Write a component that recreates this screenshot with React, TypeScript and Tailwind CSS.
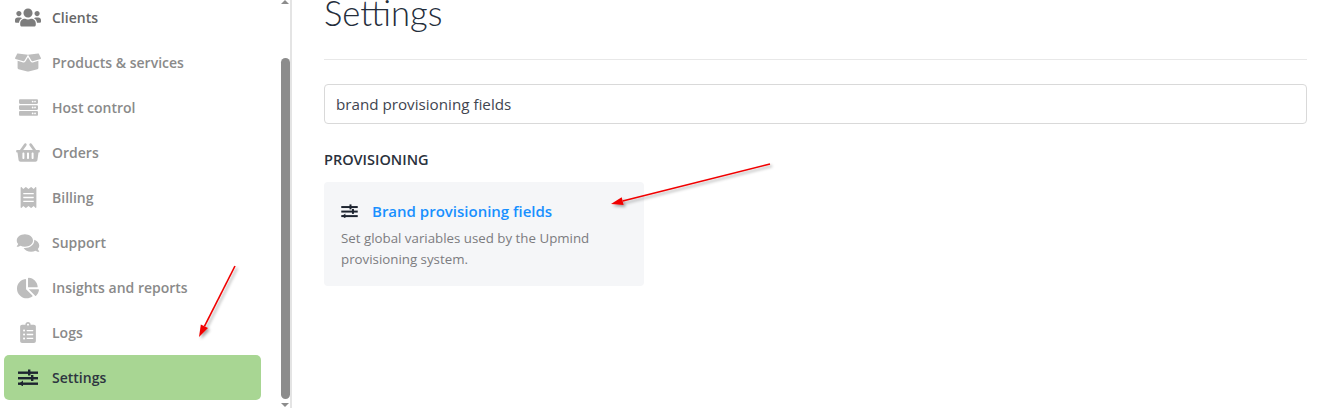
import React from "react";
import { FaUsers, FaBoxOpen, FaServer, FaShoppingBasket, FaReceipt, FaComments, FaChartPie, FaClipboardList } from "react-icons/fa";

function Sliders({ className }: { className?: string }) {
  return (
    <svg viewBox="0 0 20 17" className={className} fill="currentColor">
      <rect x="0" y="2.5" width="20" height="2.4" />
      <rect x="10" y="0.5" width="2.4" height="6" />
      <rect x="0" y="8" width="20" height="2.4" />
      <rect x="13" y="6" width="2.4" height="6" />
      <rect x="0" y="13.5" width="20" height="2.4" />
      <polygon points="1,14.7 5,11.5 5,17.5" />
    </svg>
  );
}

const items: { label: string; icon: React.ComponentType<{ className?: string }>; size: string; dark?: boolean }[] = [
  { label: "Clients", icon: FaUsers, size: "w-[26px] h-[21px]", dark: true },
  { label: "Products & services", icon: FaBoxOpen, size: "w-[26px] h-[21px]" },
  { label: "Host control", icon: FaServer, size: "w-[21px] h-[19px]" },
  { label: "Orders", icon: FaShoppingBasket, size: "w-[24px] h-[21px]" },
  { label: "Billing", icon: FaReceipt, size: "w-[17px] h-[21px]" },
  { label: "Support", icon: FaComments, size: "w-[24px] h-[20px]" },
  { label: "Insights and reports", icon: FaChartPie, size: "w-[22px] h-[22px]" },
  { label: "Logs", icon: FaClipboardList, size: "w-[16px] h-[21px]" },
];

function Arrow({ className, x1, y1, x2, y2, w, h, id }: { className: string; x1: number; y1: number; x2: number; y2: number; w: number; h: number; id: string }) {
  const a = Math.atan2(y2 - y1, x2 - x1);
  const L = 12;
  const W = 4;
  const bx = x2 - L * Math.cos(a);
  const by = y2 - L * Math.sin(a);
  const px = -Math.sin(a) * W;
  const py = Math.cos(a) * W;
  return (
    <svg className={className} width={w} height={h} viewBox={`0 0 ${w} ${h}`} fill="none">
      <defs>
        <filter id={id} x="-20%" y="-20%" width="150%" height="150%">
          <feDropShadow dx="2" dy="2" stdDeviation="1.5" floodColor="#000" floodOpacity="0.35" />
        </filter>
      </defs>
      <g filter={`url(#${id})`}>
        <line x1={x1} y1={y1} x2={bx} y2={by} stroke="#f00000" strokeWidth="1.6" />
        <polygon points={`${x2},${y2} ${bx + px},${by + py} ${bx - px},${by - py}`} fill="#f00000" />
      </g>
    </svg>
  );
}

export default function App() {
  return (
    <div className="relative flex h-[408px] w-[1324px] overflow-hidden bg-white font-['Open_Sans','Noto_Sans',sans-serif]">
      <aside className="flex h-full w-[292px] shrink-0 border-r-2 border-[#e4e4e4]">
        <nav className="-mt-[5px] flex w-[280px] shrink-0 flex-col px-[4px]">
          <div className="w-[257px]">
            {items.map((it, i) => {
              const Icon = it.icon;
              return (
                <div key={it.label} className="flex h-[45px] items-center">
                  <span className="flex w-[48px] shrink-0 justify-center">
                    <Icon className={`${it.size} ${it.dark ? "text-[#7d7d7d]" : "text-[#bdbdbd]"}`} />
                  </span>
                  <span className={`text-[14px] font-semibold ${i === 0 ? "text-[#666666]" : "text-[#8a8a8a]"}`}>{it.label}</span>
                </div>
              );
            })}
            <div className="flex h-[45px] items-center rounded-[5px] bg-[#a8d693]">
              <span className="flex w-[48px] shrink-0 justify-center">
                <Sliders className="h-[17px] w-[20px] text-[#1d2430]" />
              </span>
              <span className="text-[14px] font-semibold text-[#2d3540]">Settings</span>
            </div>
          </div>
        </nav>
        <div className="flex w-[10px] shrink-0 flex-col items-center justify-between">
          <div className="h-0 w-0 border-x-[4px] border-b-[4px] border-x-transparent border-b-[#8c8c8c]" />
          <div className="mb-[4px] mt-[54px] w-[9px] flex-1 rounded-[5px] bg-[#8c8c8c]" />
          <div className="mb-[1px] h-0 w-0 border-x-[4px] border-t-[4px] border-x-transparent border-t-[#8c8c8c]" />
        </div>
      </aside>
      <main className="w-[1015px] pl-[32px]">
        <h1 className="mt-[-9px] h-[44px] font-['Lato',sans-serif] text-[34.6px] leading-[44px] font-light text-[#242d3b]">Settings</h1>
        <div className="mt-[24px] border-t border-[#e8e8e8]" />
        <div className="mt-[24px] flex h-[40px] items-center rounded-[4px] border border-[#d9d9d9] px-[11px] text-[15.2px] text-[#3f4550]">brand provisioning fields</div>
        <h2 className="mt-[26px] text-[14.5px] leading-[19px] font-semibold text-[#2a313c]">PROVISIONING</h2>
        <div className="mt-[13px] h-[104px] w-[320px] rounded-[4px] bg-[#f5f6f8] px-[17px] pt-[18px]">
          <div className="flex h-[22px] items-center">
            <Sliders className="h-[14px] w-[17px] text-[#1d2430]" />
            <span className="ml-[14px] text-[15px] font-semibold text-[#1890ff]">Brand provisioning fields</span>
          </div>
          <p className="mt-[6px] text-[13.3px] leading-[21px] text-[#7c7c80]">Set global variables used by the Upmind provisioning system.</p>
        </div>
      </main>
      <Arrow id="a1" className="absolute left-[190px] top-[260px]" w={60} h={90} x1={45} y1={6} x2={9} y2={77} />
      <Arrow id="a2" className="absolute left-[605px] top-[158px]" w={180} h={60} x1={165} y1={6} x2={6} y2={46} />
    </div>
  );
}
